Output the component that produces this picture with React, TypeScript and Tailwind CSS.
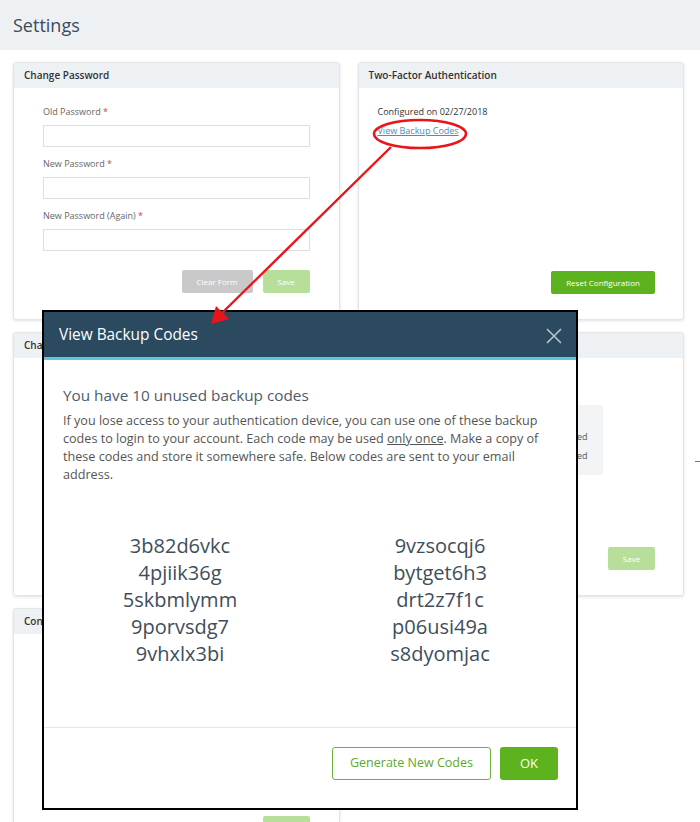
import React from 'react';

const Card = ({ title, className = '', children }: { title: string; className?: string; children?: React.ReactNode }) => (
    <div className={`flex flex-col bg-white border border-[#e3e6e9] rounded-[3px] shadow-[0_1px_3px_rgba(0,0,0,0.12)] overflow-hidden ${className}`}>
        <div className="h-[25px] shrink-0 flex items-center px-[10px] bg-[#eef1f4] text-[10px] font-semibold text-[#333]">
            {title}
        </div>
        {children}
    </div>
);

const Field = ({ label, first }: { label: string; first?: boolean }) => (
    <div className={first ? '' : 'mt-[10px]'}>
        <div className="text-[9px] leading-[14px] text-[#666]">
            {label} <span className="text-[#e53935]">*</span>
        </div>
        <div className="mt-[6px] h-[22px] border border-[#dedede] bg-white" />
    </div>
);

const leftCodes = ['3b82d6vkc', '4pjiik36g', '5skbmlymm', '9porvsdg7', '9vhxlx3bi'];
const rightCodes = ['9vzsocqj6', 'bytget6h3', 'drt2z7f1c', 'p06usi49a', 's8dyomjac'];

const BackupCodesModal = () => (
    <div className="absolute left-[42px] top-[310px] w-[536px] h-[500px] flex flex-col bg-white border-2 border-black">
        <div className="h-[45px] shrink-0 flex items-center justify-between bg-[#2b4a60] pl-[15px] pr-[14px]">
            <span className="text-[15.4px] text-white">View Backup Codes</span>
            <svg width="16" height="16" viewBox="0 0 16 16" className="mt-[2px]">
                <path d="M1 1 L15 15 M15 1 L1 15" stroke="#b7c3cd" strokeWidth="1.6" />
            </svg>
        </div>
        <div className="h-[3px] shrink-0 bg-[#5ec6df]" />
        <div className="h-[367px] shrink-0 pt-[24px]">
            <div className="pl-[19px] pr-[28px]">
                <div className="text-[15.3px] leading-[22px] text-[#4e5c6a]">You have 10 unused backup codes</div>
                <p className="mt-[6px] text-[12.6px] leading-[18px] text-[#555]">
                    If you lose access to your authentication device, you can use one of these backup codes to login to your account. Each code may be used <span className="underline">only once</span>. Make a copy of these codes and store it somewhere safe. Below codes are sent to your email address.
                </p>
            </div>
            <div className="mt-[48px] grid grid-cols-2 px-[6px] text-center text-[20px] leading-[27px] text-[#404e5c]">
                <div>
                    {leftCodes.map(c => <div key={c}>{c}</div>)}
                </div>
                <div>
                    {rightCodes.map(c => <div key={c}>{c}</div>)}
                </div>
            </div>
        </div>
        <div className="flex-1 border-t border-[#e6e6e6] flex items-start justify-end gap-[9px] pt-[19px] pr-[18px]">
            <button className="w-[159px] h-[33px] border border-[#6ab23a] rounded-[3px] text-[12.5px] text-[#5aa92a] bg-white">
                Generate New Codes
            </button>
            <button className="w-[58px] h-[33px] rounded-[3px] bg-[#5cb31e] text-[13px] text-white">
                OK
            </button>
        </div>
    </div>
);

const App = () => {
    return (
        <div className="relative w-[700px] h-[822px] overflow-hidden bg-white font-['Open_Sans',sans-serif]">
            <div className="h-[50px] flex items-center px-[13px] bg-[#eef1f4]">
                <h1 className="text-[18px] text-[#3c4b5a]">Settings</h1>
            </div>

            <div className="grid grid-cols-2 gap-x-[18px] gap-y-[12px] pl-[13px] pr-[16px] pt-[12px]">
                <Card title="Change Password" className="h-[258px]">
                    <div className="px-[29px] pt-[17px]">
                        <Field label="Old Password" first />
                        <Field label="New Password" />
                        <Field label="New Password (Again)" />
                        <div className="mt-[19px] flex justify-end gap-[10px]">
                            <button className="w-[71px] h-[23px] rounded-[2px] bg-[#c9c9c9] text-[8px] text-white">Clear Form</button>
                            <button className="w-[47px] h-[23px] rounded-[2px] bg-[#b8df99] text-[8px] text-white">Save</button>
                        </div>
                    </div>
                </Card>

                <Card title="Two-Factor Authentication" className="h-[258px]">
                    <div className="flex-1 flex flex-col px-[19px] pt-[17px] pb-[25px] pr-[28px]">
                        <div className="text-[9px] leading-[14px] text-[#333]">Configured on 02/27/2018</div>
                        <a className="mt-[5px] self-start text-[9px] leading-[14px] text-[#4a8cc4] underline">View Backup Codes</a>
                        <button className="mt-auto self-end w-[104px] h-[23px] rounded-[2px] bg-[#5cb31e] text-[8px] text-white">
                            Reset Configuration
                        </button>
                    </div>
                </Card>

                <Card title="Change Email Address" className="h-[264px]" />

                <Card title="Login Notifications" className="h-[264px]">
                    <div className="flex-1 flex flex-col pl-[19px] pr-[28px] pt-[47px] pb-[25px]">
                        <div className="w-[225px] h-[70px] rounded-[3px] bg-[#f2f4f6] flex flex-col items-end pt-[22px] pr-[15px] text-[9px] leading-[19px] text-[#555]">
                            <div>Enabled</div>
                            <div>Enabled</div>
                        </div>
                        <button className="mt-auto self-end w-[47px] h-[23px] rounded-[2px] bg-[#b8df99] text-[8px] text-white">Save</button>
                    </div>
                </Card>

                <Card title="Contact Information" className="h-[240px]">
                    <div className="flex-1 flex flex-col px-[29px] pt-[182px]">
                        <div className="self-end w-[47px] h-[23px] rounded-[2px] bg-[#b8df99]" />
                    </div>
                </Card>
            </div>

            <div className="absolute left-[695px] top-[461px] w-[5px] h-[1px] bg-[#2f86d6]" />

            <BackupCodesModal />

            <svg className="absolute left-0 top-0 pointer-events-none" width="700" height="822" viewBox="0 0 700 822">
                <ellipse cx="420" cy="134" rx="46" ry="14" fill="none" stroke="#e8141a" strokeWidth="2.6" />
                <line x1="391" y1="147" x2="222" y2="313" stroke="#e8141a" strokeWidth="2.4" />
                <polygon points="211,324 216,306 229,319" fill="#e8141a" />
            </svg>
        </div>
    );
};

export default App;
